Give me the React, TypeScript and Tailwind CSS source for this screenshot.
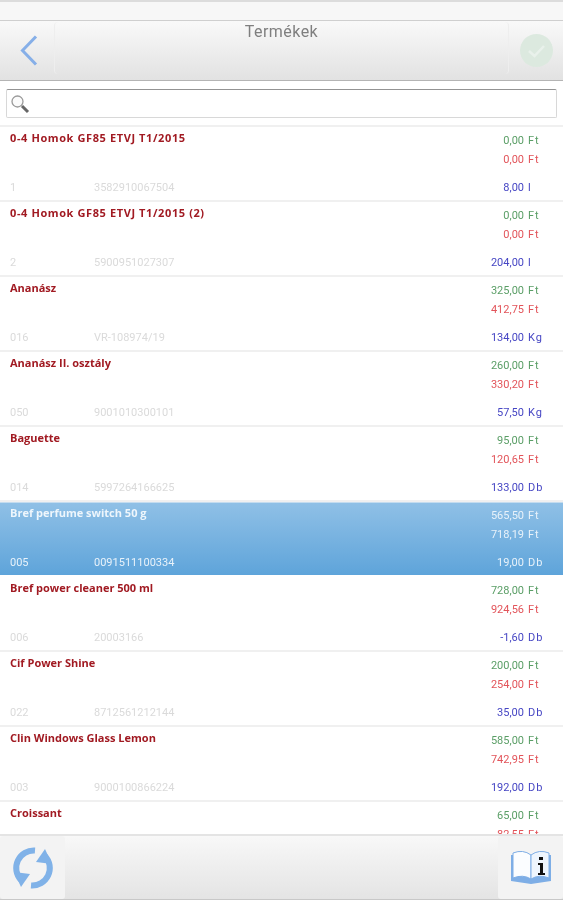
import React from "react";

type Item = {
  name: string;
  code: string;
  barcode: string;
  net: string;
  gross: string;
  qty: string;
  unit: string;
};

const items: Item[] = [
  { name: "0-4 Homok GF85 ETVJ T1/2015", code: "1", barcode: "3582910067504", net: "0,00", gross: "0,00", qty: "8,00", unit: "l" },
  { name: "0-4 Homok GF85 ETVJ T1/2015 (2)", code: "2", barcode: "5900951027307", net: "0,00", gross: "0,00", qty: "204,00", unit: "l" },
  { name: "Ananász", code: "016", barcode: "VR-108974/19", net: "325,00", gross: "412,75", qty: "134,00", unit: "Kg" },
  { name: "Ananász II. osztály", code: "050", barcode: "9001010300101", net: "260,00", gross: "330,20", qty: "57,50", unit: "Kg" },
  { name: "Baguette", code: "014", barcode: "5997264166625", net: "95,00", gross: "120,65", qty: "133,00", unit: "Db" },
  { name: "Bref perfume switch 50 g", code: "005", barcode: "0091511100334", net: "565,50", gross: "718,19", qty: "19,00", unit: "Db" },
  { name: "Bref power cleaner 500 ml", code: "006", barcode: "20003166", net: "728,00", gross: "924,56", qty: "-1,60", unit: "Db" },
  { name: "Cif Power Shine", code: "022", barcode: "8712561212144", net: "200,00", gross: "254,00", qty: "35,00", unit: "Db" },
  { name: "Clin Windows Glass Lemon", code: "003", barcode: "9000100866224", net: "585,00", gross: "742,95", qty: "192,00", unit: "Db" },
  { name: "Croissant", code: "", barcode: "", net: "65,00", gross: "82,55", qty: "", unit: "" },
];

const Row = ({ item, selected, wide }: { item: Item; selected: boolean; wide: boolean }) => (
  <div
    className={
      "flex h-[75px] shrink-0 justify-between border-b-2 pl-[10px] " +
      (selected
        ? "border-t border-t-[#c4dcef] border-b-white bg-gradient-to-b from-[#8fc0e6] to-[#5ea4da]"
        : "border-[#f0f0f0] bg-white")
    }
  >
    <div className={"flex w-[400px] flex-col justify-between pb-[5px] " + (selected ? "pt-[2px]" : "pt-[3px]")}>
      <p
        className={
          "font-['Open_Sans',sans-serif] text-[11px] leading-[16px] font-bold " +
          (wide ? "tracking-[0.6px] " : "") +
          (selected ? "text-[#eef6fc]" : "text-[#a11a22]")
        }
      >
        {item.name}
      </p>
      <div className={"flex text-[11px] leading-[14px] " + (selected ? "text-[#e8f2fa]" : "text-[#dadada]")}>
        <span className="w-[84px]">{item.code}</span>
        <span>{item.barcode}</span>
      </div>
    </div>
    <div className={"flex w-[153px] flex-col text-[11px] leading-[14px] " + (selected ? "pt-[6px]" : "pt-[7px]")}>
      <div className="flex">
        <span className={"w-[114px] text-right " + (selected ? "text-[#e8f2fa]" : "text-[#5a9e66]")}>{item.net}</span>
        <span className={"pl-[4px] tracking-[1px] " + (selected ? "text-[#e8f2fa]" : "text-[#5a9e66]")}>Ft</span>
      </div>
      <div className="mt-[5px] flex">
        <span className={"w-[114px] text-right " + (selected ? "text-[#e8f2fa]" : "text-[#e2545a]")}>{item.gross}</span>
        <span className={"pl-[4px] tracking-[1px] " + (selected ? "text-[#e8f2fa]" : "text-[#e2545a]")}>Ft</span>
      </div>
      <div className="mt-[14px] flex">
        <span className={"w-[114px] text-right " + (selected ? "text-[#e8f2fa]" : "text-[#4646c4]")}>{item.qty}</span>
        <span className={"pl-[4px] tracking-[1px] " + (selected ? "text-[#e8f2fa]" : "text-[#4646c4]")}>{item.unit}</span>
      </div>
    </div>
  </div>
);

const App = () => {
  return (
    <div className="flex h-[900px] w-[563px] flex-col overflow-hidden bg-white font-['Roboto',sans-serif] blur-[0.4px]">
      {/* status strip */}
      <div className="h-[20px] shrink-0 border-t-2 border-[#dcdcdc] bg-[#f7f7f7]" />

      {/* header */}
      <div className="flex h-[61px] shrink-0 border-y border-t-[#cfcfcf] border-b-[#b4b4b4] bg-gradient-to-b from-[#f9f9f9] to-[#e2e2e2]">
        <div className="flex w-[54px] shrink-0 items-center pl-[20px]">
          <svg width="18" height="31" viewBox="0 0 18 31" fill="none">
            <path d="M16 1.5 L2.5 15.5 L16 29.5" stroke="#86afe8" strokeWidth="3" />
          </svg>
        </div>
        <div className="mt-[1px] mb-[6px] flex-1 rounded-[4px] border-x border-[#eeeeee] text-center text-[16px] leading-[19px] tracking-[0.45px] text-[#7f7f7f]">
          Termékek
        </div>
        <div className="flex w-[54px] shrink-0 items-center justify-center pl-[1px]">
          <svg width="33" height="33" viewBox="0 0 33 33">
            <circle cx="16.5" cy="16.5" r="16.5" fill="#dce9df" />
            <path d="M9 17 L14.5 22 L24 12" stroke="#e9f1eb" strokeWidth="2.5" fill="none" />
          </svg>
        </div>
      </div>

      {/* search */}
      <div className="h-[44px] shrink-0 bg-white px-[6px] pt-[8px]">
        <div className="flex h-[29px] items-center rounded-[2px] border border-[#d8d8d8] border-t-[#939393] bg-white pl-[3px]">
          <svg width="20" height="20" viewBox="0 0 20 20" fill="none">
            <circle cx="7.5" cy="7.5" r="5.5" stroke="#9a9a9a" strokeWidth="1.3" fill="#fbfbfb" />
            <path d="M12 12 L18 18" stroke="#666" strokeWidth="3" />
          </svg>
        </div>
      </div>

      {/* list */}
      <div className="flex min-h-0 flex-1 flex-col overflow-hidden border-t-2 border-[#f0f0f0]">
        {items.map((item, i) => (
          <Row key={i} item={item} selected={i === 5} wide={i < 2} />
        ))}
      </div>

      {/* footer */}
      <div className="flex h-[66px] shrink-0 justify-between border-t-2 border-b border-t-[#e4e4e4] border-b-[#c8c8c8] bg-gradient-to-b from-[#f8f8f8] to-[#e4e4e4]">
        <div className="flex w-[65px] items-center justify-center rounded-[3px] bg-[#f3f3f3]">
          <svg width="44" height="44" viewBox="0 0 44 44" fill="none">
            <path d="M24 4.5 A17.5 17.5 0 0 0 10 34" stroke="#80b2e8" strokeWidth="6" />
            <path d="M3 26 L19 28 L10 41 Z" fill="#80b2e8" />
            <path d="M20 39.5 A17.5 17.5 0 0 0 34 10" stroke="#80b2e8" strokeWidth="6" />
            <path d="M41 18 L25 16 L34 3 Z" fill="#80b2e8" />
          </svg>
        </div>
        <div className="flex w-[65px] items-center justify-center rounded-[3px] bg-[#f3f3f3]">
          <svg width="42" height="38" viewBox="0 0 42 38" fill="none">
            <path d="M1 6 V32 L21 35 L41 32 V6" fill="#7eaee6" />
            <path d="M3 4 Q13 0 21 6 V30 Q13 25 3 29 Z" fill="#fbfdff" stroke="#7eaee6" strokeWidth="1" />
            <path d="M21 6 Q29 0 39 4 V29 Q29 25 21 30 Z" fill="#eef5fd" stroke="#7eaee6" strokeWidth="1" />
            <path d="M29 8 h4 v3 h-4 Z M28 14 h5 v10 h2 v2 h-7 v-2 h2 v-8 h-2 Z" fill="#111" />
          </svg>
        </div>
      </div>
    </div>
  );
};

export default App;
